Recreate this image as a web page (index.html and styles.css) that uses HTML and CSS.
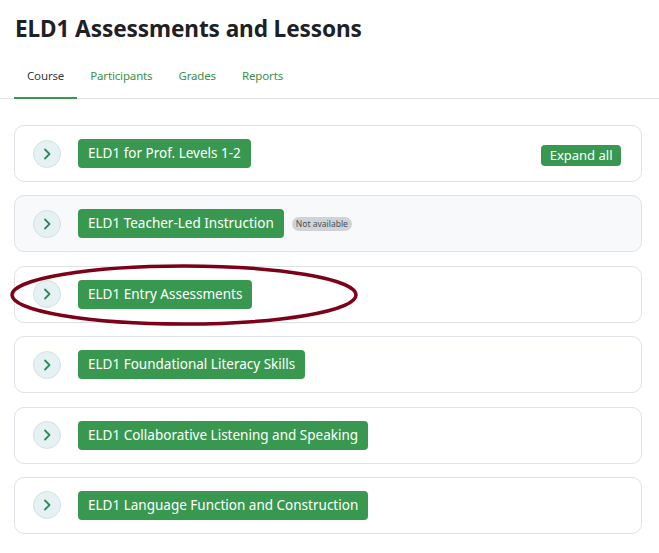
FILE: index.html
```html
<!DOCTYPE html>
<html lang="en">
<head>
<meta charset="utf-8">
<title>ELD1 Assessments and Lessons</title>
<link rel="stylesheet" href="styles.css">
</head>
<body>
<div class="page">
  <h1 class="page-title">ELD1 Assessments and Lessons</h1>
  <nav class="tabs">
    <a class="tab active">Course</a>
    <a class="tab">Participants</a>
    <a class="tab">Grades</a>
    <a class="tab">Reports</a>
  </nav>

  <div class="sections">
    <div class="section">
      <span class="toggle"><svg viewBox="0 0 28 28" width="28" height="28"><path d="M12 9.5 L16.5 14 L12 18.5" /></svg></span>
      <span class="section-name">ELD1 for Prof. Levels 1-2</span>
      <span class="expand-all">Expand all</span>
    </div>

    <div class="section muted">
      <span class="toggle"><svg viewBox="0 0 28 28" width="28" height="28"><path d="M12 9.5 L16.5 14 L12 18.5" /></svg></span>
      <span class="section-name">ELD1 Teacher-Led Instruction</span>
      <span class="badge">Not available</span>
    </div>

    <div class="section marked">
      <span class="toggle"><svg viewBox="0 0 28 28" width="28" height="28"><path d="M12 9.5 L16.5 14 L12 18.5" /></svg></span>
      <span class="section-name">ELD1 Entry Assessments</span>
      <svg class="ring" width="356" height="66" viewBox="0 0 356 66"><ellipse cx="174" cy="32" rx="172" ry="29" /></svg>
    </div>

    <div class="section">
      <span class="toggle"><svg viewBox="0 0 28 28" width="28" height="28"><path d="M12 9.5 L16.5 14 L12 18.5" /></svg></span>
      <span class="section-name">ELD1 Foundational Literacy Skills</span>
    </div>

    <div class="section">
      <span class="toggle"><svg viewBox="0 0 28 28" width="28" height="28"><path d="M12 9.5 L16.5 14 L12 18.5" /></svg></span>
      <span class="section-name">ELD1 Collaborative Listening and Speaking</span>
    </div>

    <div class="section">
      <span class="toggle"><svg viewBox="0 0 28 28" width="28" height="28"><path d="M12 9.5 L16.5 14 L12 18.5" /></svg></span>
      <span class="section-name">ELD1 Language Function and Construction</span>
    </div>
  </div>
</div>
</body>
</html>
```

FILE: styles.css
```css
* { box-sizing: border-box; }

body {
  margin: 0;
  background: #ffffff;
  font-family: "Noto Sans", "Open Sans", "DejaVu Sans", sans-serif;
  color: #1d2125;
}

.page-title {
  margin: 0;
  padding: 13px 15px 0;
  font-size: 22.6px;
  line-height: 32px;
  font-weight: 700;
  letter-spacing: -0.1px;
}

.tabs {
  display: flex;
  margin-top: 10px;
  border-bottom: 1px solid #dee2e6;
  padding-left: 14px;
}

.tab {
  display: block;
  padding: 12px 13px 13px;
  font-size: 11.5px;
  line-height: 17px;
  letter-spacing: -0.15px;
  color: #3b8f4b;
  border-bottom: 2px solid transparent;
  margin-bottom: -1px;
}

.tab.active {
  color: #343a40;
  border-bottom-color: #38984f;
}

.sections {
  display: flex;
  flex-direction: column;
  gap: 13.4px;
  padding: 26px 17px 0 14px;
}

.section {
  position: relative;
  display: flex;
  align-items: center;
  height: 57px;
  padding: 0 20px 0 18px;
  border: 1px solid #dee2e6;
  border-radius: 10px;
  background: #ffffff;
}

.section.muted { background: #f8f9fa; }

.toggle {
  flex: none;
  width: 28px;
  height: 28px;
  border-radius: 50%;
  background: #e5f1f2;
  border: 1px solid #d2e2e4;
  display: flex;
  align-items: center;
  justify-content: center;
}

.toggle svg {
  display: block;
  margin: -1px;
}

.toggle path {
  fill: none;
  stroke: #2e8a5c;
  stroke-width: 1.8;
  stroke-linecap: round;
  stroke-linejoin: round;
}

.section-name {
  margin-left: 17px;
  height: 29px;
  padding: 0 10px;
  border-radius: 4px;
  background: #38984f;
  color: #ffffff;
  font-size: 13.5px;
  line-height: 29px;
  white-space: nowrap;
}

.expand-all {
  margin-left: auto;
  margin-top: 4px;
  height: 21px;
  padding: 0 8.5px;
  border-radius: 4px;
  background: #38984f;
  color: #ffffff;
  font-size: 13px;
  line-height: 21px;
}

.badge {
  margin-left: 8px;
  height: 14px;
  padding: 0 4px;
  border-radius: 7px;
  background: #cfd3d8;
  color: #4a4f55;
  font-size: 8.5px;
  line-height: 14px;
}

.ring {
  position: absolute;
  left: -5px;
  top: -4px;
  overflow: visible;
  pointer-events: none;
}

.ring ellipse {
  fill: none;
  stroke: #7c0017;
  stroke-width: 3.5;
}
```
